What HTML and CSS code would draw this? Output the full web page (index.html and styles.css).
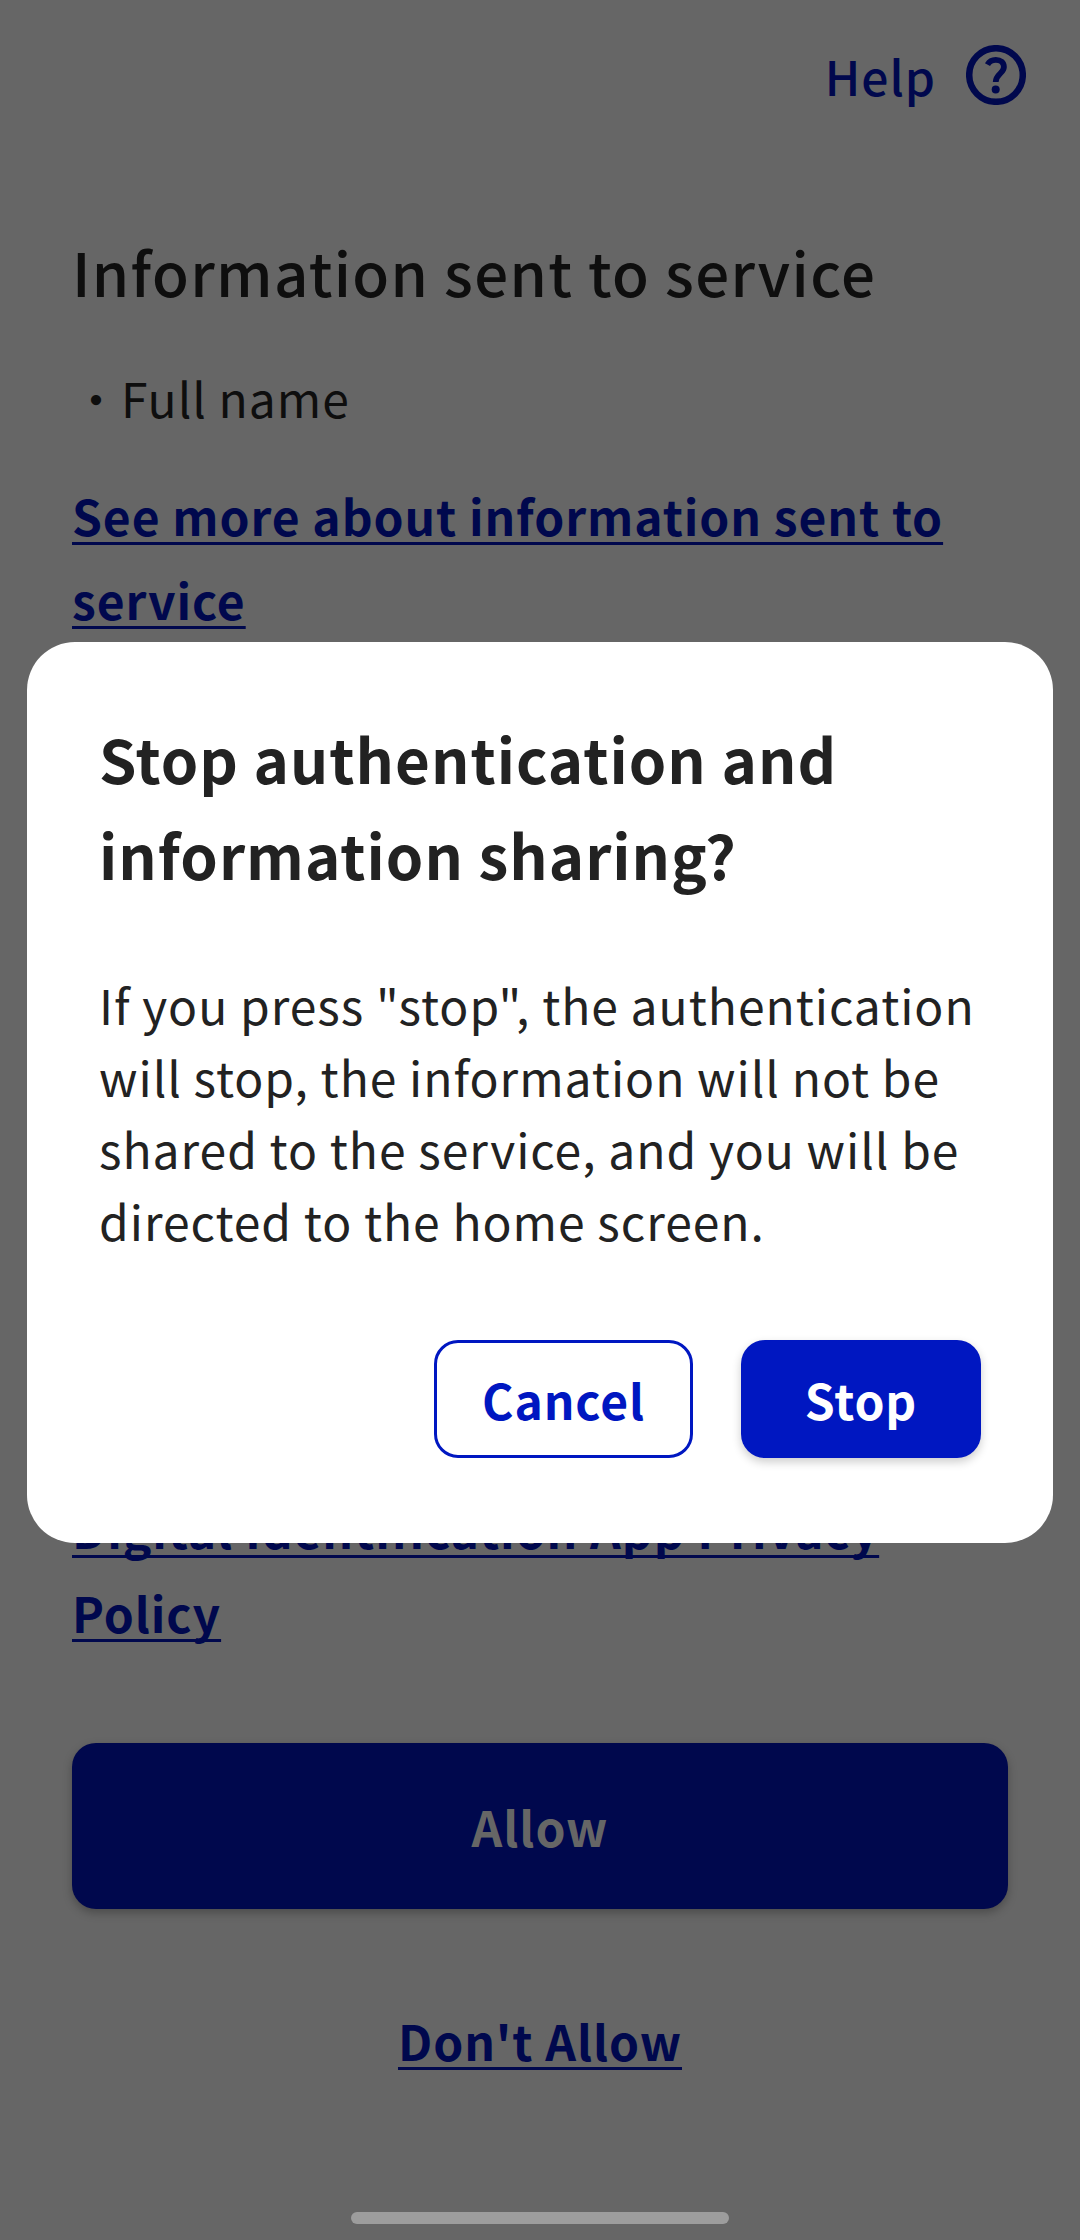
FILE: index.html
```html
<!DOCTYPE html>
<html lang="en">
<head>
<meta charset="utf-8">
<title>Information sharing</title>
<link rel="stylesheet" href="styles.css">
</head>
<body>
<div class="screen">
  <main class="page">
    <header class="topbar">
      <span>Help</span>
      <svg class="help-icon" viewBox="0 0 60 60">
        <circle class="ring" cx="30" cy="30" r="26.800"/>
        <path class="hook" d="M21.500 19.600C23.200 16.500 26.200 14.800 29.800 14.800C34.600 14.800 37.900 17.700 37.900 22C37.900 28.400 29.900 28.800 29.700 37"/>
        <circle class="dot" cx="29.700" cy="44.600" r="4"/>
      </svg>
    </header>
    <h1 class="title">Information sent to service</h1>
    <p class="item">・Full name</p>
    <a class="link more">See more about information sent to<br>service</a>
    <a class="link privacy">Digital Identification App Privacy<br>Policy</a>
    <button class="allow">Allow</button>
    <a class="link deny">Don't Allow</a>
  </main>
  <section class="dialog">
    <h2 class="dialog-title">Stop authentication and<br>information sharing?</h2>
    <p class="dialog-text">If you press "stop", the authentication<br>will stop, the information will not be<br>shared to the service, and you will be<br>directed to the home screen.</p>
    <div class="actions">
      <button class="btn cancel">Cancel</button>
      <button class="btn stop">Stop</button>
    </div>
  </section>
  <div class="home-bar"></div>
</div>
</body>
</html>
```
FILE: styles.css
```css
* { box-sizing: border-box; }
body { margin: 0; }
h1, h2, p { margin: 0; }
button { font: inherit; letter-spacing: inherit; border: 0; padding: 0; }
.screen {
  position: relative;
  width: 1080px;
  height: 2240px;
  overflow: hidden;
  background: #666;
  color: #0e0e0e;
  font: 400 48px/72px "Noto Sans CJK JP", sans-serif;
  letter-spacing: 0.97px;
}
.page { display: flex; flex-direction: column; height: 2240px; padding: 0 72px; }
.topbar { display: flex; justify-content: flex-end; align-items: center; gap: 30px; height: 150px; margin-right: -18px; color: #00084d; font-weight: 500; }
.help-icon { width: 60px; height: 60px; }
.ring { fill: none; stroke: #00084d; stroke-width: 6.5; }
.hook { fill: none; stroke: #00084d; stroke-width: 5.8; }
.dot { fill: #00084d; }
.title { margin-top: 73px; font-size: 60px; line-height: 96px; font-weight: 500; letter-spacing: 1.3px; }
.item { margin-top: 42px; }
.link {
  color: #00084d;
  font-weight: 700;
  line-height: 84px;
  letter-spacing: 0.92px;
  text-decoration: underline;
  text-decoration-thickness: 3px;
  text-underline-offset: 6px;
  text-decoration-skip-ink: none;
}
.more { margin-top: 40px; }
.privacy { margin-top: 845px; }
.allow { flex: none; height: 166px; margin-top: 89px; border-radius: 24px; background: #00084d; color: #666; font-weight: 700; box-shadow: 0 4px 10px #0004; }
.deny { align-self: center; margin-top: 89px; }
.dialog { position: absolute; left: 27px; top: 642px; width: 1026px; height: 901px; padding: 68px 72px 0; border-radius: 48px; background: #fff; color: #222; }
.dialog-title { font-size: 60px; line-height: 96px; font-weight: 700; letter-spacing: 1.02px; }
.dialog-text { margin-top: 66px; white-space: nowrap; }
.actions { display: flex; justify-content: flex-end; gap: 48px; margin-top: 84px; }
.btn { height: 118px; border-radius: 24px; font-weight: 700; letter-spacing: 0.9px; }
.cancel { width: 259px; border: 3px solid #0017c1; background: #fff; color: #0017c1; }
.stop { width: 240px; background: #0017c1; color: #fff; box-shadow: 0 4px 10px #0003; }
.home-bar { position: absolute; left: 351px; bottom: 16px; width: 378px; height: 12px; border-radius: 6px; background: #9d9d9d; }
```
